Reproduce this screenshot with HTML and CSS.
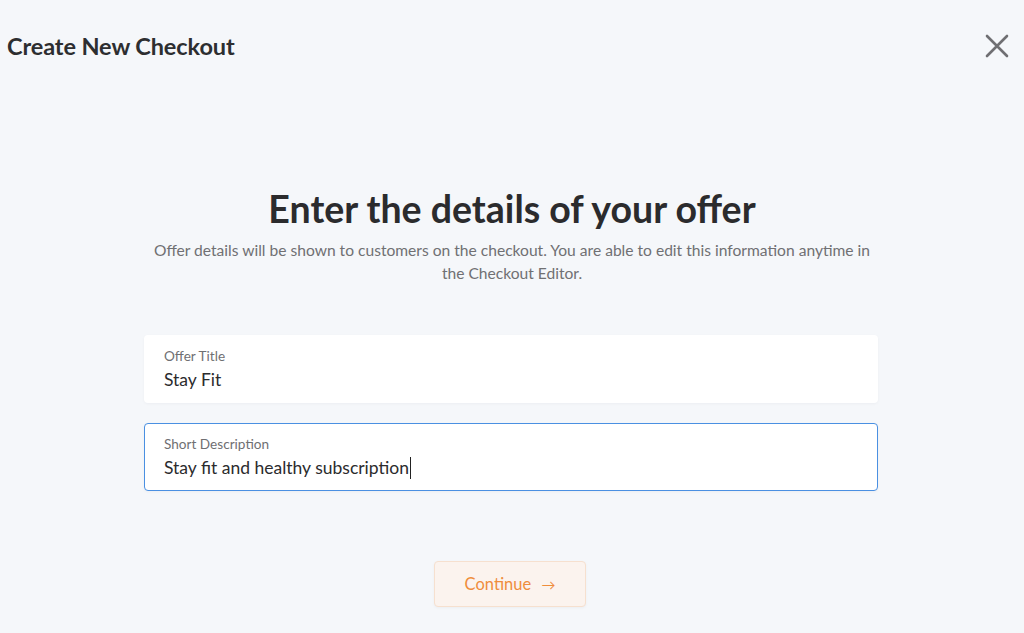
FILE: index.html
```html
<!DOCTYPE html>
<html lang="en">
<head>
  <meta charset="UTF-8">
  <title>Create New Checkout</title>
  <link rel="stylesheet" href="styles.css">
</head>
<body>
  <!-- Header -->
  <header class="top-bar">
    <h1 class="page-title">Create New Checkout</h1>
    <button class="close-btn" aria-label="Close">
      <svg width="24" height="24" viewBox="0 0 24 24">
        <path d="M2 2 L22 22 M22 2 L2 22" stroke="#6f6f72" stroke-width="2.6" stroke-linecap="round" fill="none"/>
      </svg>
    </button>
  </header>

  <!-- Form -->
  <main class="offer">
    <h2 class="offer-heading">Enter the details of your offer</h2>
    <p class="offer-desc">Offer details will be shown to customers on the checkout. You are able to edit this information anytime in the Checkout Editor.</p>

    <div class="fields">
      <label class="field">
        <span class="field-label">Offer Title</span>
        <span class="field-value">Stay Fit</span>
      </label>
      <label class="field field-active">
        <span class="field-label">Short Description</span>
        <span class="field-value">Stay fit and healthy subscription<span class="caret"></span></span>
      </label>
    </div>

    <button class="continue-btn">Continue <span class="arrow">&rarr;</span></button>
  </main>
</body>
</html>
```

FILE: styles.css
```css
/* Reset */
* {
  margin: 0;
  padding: 0;
  box-sizing: border-box;
}

body {
  font-family: Lato, "Open Sans", sans-serif;
  background-color: #f5f7fa;
  color: #2b2b2d;
  width: 1024px;
  height: 633px;
  overflow: hidden;
}

/* Header */
.top-bar {
  display: flex;
  justify-content: space-between;
  align-items: center;
  padding: 32px 15px 0 7px;
}

.page-title {
  font-size: 23.5px;
  font-weight: 700;
  color: #2d2e30;
  letter-spacing: -0.1px;
}

.close-btn {
  background: none;
  border: none;
  width: 24px;
  height: 24px;
  cursor: pointer;
}

/* Offer form */
.offer {
  display: flex;
  flex-direction: column;
  align-items: center;
  padding-top: 126px;
}

.offer-heading {
  font-size: 37.5px;
  font-weight: 700;
  color: #2b2b2d;
  line-height: 46px;
}

.offer-desc {
  margin-top: 7px;
  max-width: 730px;
  text-align: center;
  font-size: 15.6px;
  line-height: 23px;
  color: #707073;
}

.fields {
  margin-top: 50px;
  margin-right: 2px;
  width: 734px;
  display: flex;
  flex-direction: column;
  gap: 20px;
}

.field {
  display: flex;
  flex-direction: column;
  height: 68px;
  padding: 11px 19px 0;
  background-color: #fff;
  border: 1px solid transparent;
  border-radius: 4px;
  box-shadow: 0 1px 3px rgba(20, 30, 60, 0.04);
}

.field-active {
  border-color: #4a90e2;
}

.field-label {
  font-size: 13.6px;
  line-height: 18px;
  color: #6f6f72;
}

.field-value {
  margin-top: 4px;
  font-size: 17.5px;
  line-height: 22px;
  color: #2b2b2d;
  display: flex;
  align-items: center;
}

.caret {
  display: inline-block;
  width: 1px;
  height: 22px;
  margin-left: 1px;
  background-color: #222;
}

.continue-btn {
  margin-top: 70px;
  margin-right: 4px;
  width: 152px;
  height: 46px;
  background-color: #fbf3ee;
  border: 1px solid #f6e0cf;
  border-radius: 4px;
  color: #ef8d3c;
  font-family: Lato, sans-serif;
  font-size: 16.5px;
  cursor: pointer;
  box-shadow: 0 1px 3px rgba(0, 0, 0, 0.04);
}

.arrow {
  margin-left: 6px;
  font-size: 14px;
}
```
